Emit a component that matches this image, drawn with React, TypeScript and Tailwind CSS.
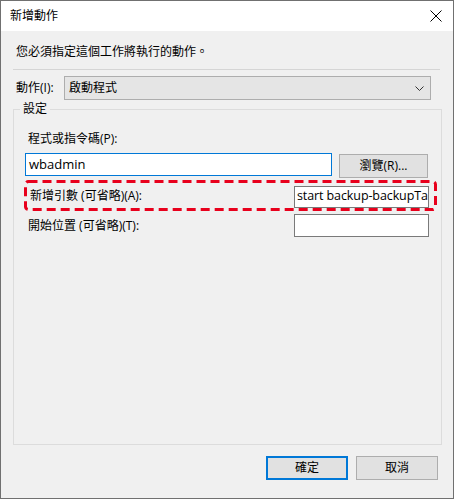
import React from "react";

const font = { fontFamily: '"Open Sans", "Noto Sans CJK TC", sans-serif' };

const TitleBar = () => (
  <div className="h-[30px] bg-white flex items-center justify-between pl-[9px] pr-[11px] shrink-0">
    <span className="text-[12px] text-black">新增動作</span>
    <svg width="12" height="12" viewBox="0 0 12 12" className="text-black">
      <path d="M0.5 0.5 L11.5 11.5 M11.5 0.5 L0.5 11.5" stroke="currentColor" strokeWidth="1" />
    </svg>
  </div>
);

const TextBox = ({
  value,
  className,
}: {
  value?: string;
  className: string;
}) => (
  <div
    className={`bg-white border flex items-center overflow-hidden whitespace-nowrap text-black ${className}`}
  >
    {value}
  </div>
);

export default function App() {
  return (
    <div style={font} className="w-[454px] h-[500px] bg-white">
      <div className="w-[454px] h-[499px] border border-[#707070] flex flex-col bg-[#f0f0f0]">
        <TitleBar />
        <div className="flex-1 flex flex-col">
          <div className="pl-[15px] pt-[14px] h-[38px] text-[12px] text-black leading-[14px]">
            您必須指定這個工作將執行的動作。
          </div>
          <div className="mx-[12px] h-px bg-[#d5d5d5] w-[427px]" />

          <div className="flex items-center mt-[6px] pl-[15px]">
            <span className="w-[48px] text-[12px] text-black">動作(I):</span>
            <div className="w-[367px] h-[24px] bg-[#e5e5e5] border border-[#adadad] flex items-center justify-between pl-[4px] pr-[6px]">
              <span className="text-[12px] text-black">啟動程式</span>
              <svg width="9" height="5" viewBox="0 0 9 5">
                <path d="M0.5 0.5 L4.5 4.5 L8.5 0.5" stroke="#333" strokeWidth="1" fill="none" />
              </svg>
            </div>
          </div>

          {/* 設定 group box */}
          <div className="relative mx-[12px] mt-[9px] w-[429px] h-[336px] border border-[#dcdcdc]">
            <span className="absolute -top-[8px] left-[6px] px-[3px] bg-[#f0f0f0] text-[12px] text-black leading-[14px]">
              設定
            </span>
            <div className="flex flex-col pt-[22px]">
              <div className="pl-[14px] text-[12px] text-black leading-[14px]">
                程式或指令碼(P):
              </div>
              <div className="flex items-start mt-[7px] pl-[11px]">
                <TextBox
                  value="wbadmin"
                  className="w-[307px] h-[23px] border-[#0078d7] pl-[3px] text-[13px]"
                />
                <button className="ml-[7px] mt-px w-[89px] h-[24px] bg-[#e1e1e1] border border-[#adadad] text-[12px] text-black">
                  瀏覽(R)...
                </button>
              </div>

              {/* highlighted row with red dashed annotation */}
              <div className="relative ml-[10px] mt-[2px] w-[413px] h-[31px] flex items-center justify-between pl-[6px] pr-[8px]">
                <svg
                  className="absolute inset-0 pointer-events-none"
                  width="413"
                  height="31"
                  viewBox="0 0 413 31"
                >
                  <rect
                    x="1.5"
                    y="1.5"
                    width="410"
                    height="28"
                    rx="3"
                    fill="none"
                    stroke="#e8001c"
                    strokeWidth="3"
                    strokeDasharray="9 5"
                  />
                </svg>
                <span className="text-[12px] text-black">新增引數 (可省略)(A):</span>
                <TextBox
                  value="start backup-backupTa"
                  className="w-[135px] h-[22px] border-[#7a7a7a] pl-[2px] mt-[2px] text-[12.5px] tracking-[-0.1px]"
                />
              </div>

              <div className="flex items-center justify-between mt-[3px] pl-[14px] pr-[12px]">
                <span className="text-[12px] text-black">開始位置 (可省略)(T):</span>
                <TextBox className="w-[135px] h-[23px] border-[#7a7a7a]" />
              </div>
            </div>
          </div>

          <div className="flex justify-end gap-[8px] pr-[15px] mt-[11px]">
            <button className="w-[82px] h-[24px] bg-[#e1e1e1] border-2 border-[#0078d7] text-[12px] text-black">
              確定
            </button>
            <button className="w-[82px] h-[24px] bg-[#e1e1e1] border border-[#adadad] text-[12px] text-black">
              取消
            </button>
          </div>
        </div>
      </div>
    </div>
  );
}
